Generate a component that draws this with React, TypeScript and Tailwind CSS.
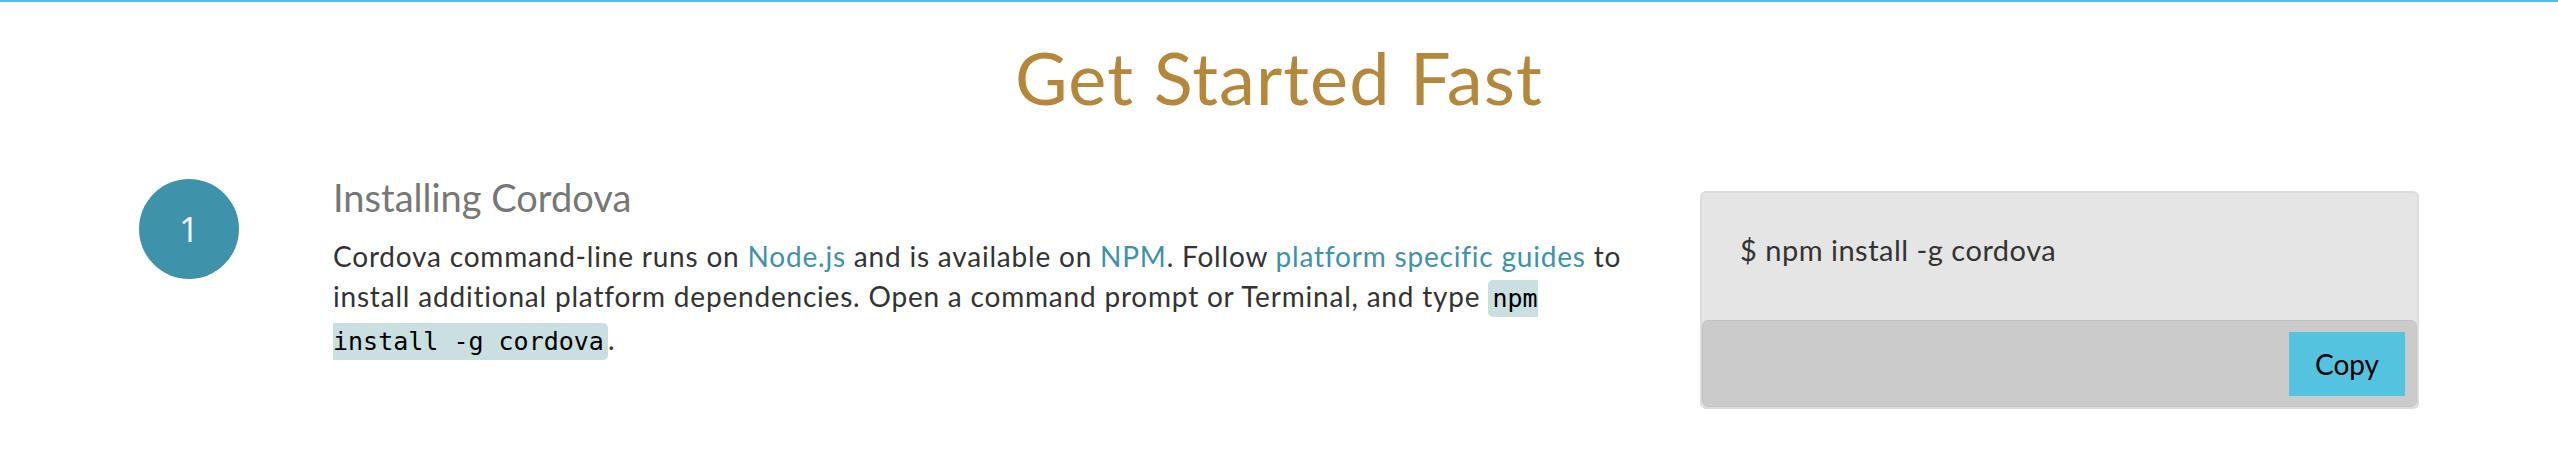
import React from 'react';

const Chip = ({ children }: { children: React.ReactNode }) => (
  <code className="font-['DejaVu_Sans_Mono',monospace] text-[25px] tracking-normal text-black bg-[#c9dfe0] rounded-[5px] px-[4px] py-[4px]">
    {children}
  </code>
);

const App = () => {
  return (
    <div className="min-h-screen bg-white border-t-2 border-[#53c2df] font-['Lato',sans-serif]">
      {/* Page title */}
      <h1 className="pt-[39px] text-center text-[72px] leading-[72px] tracking-[1.1px] font-normal text-[#b5873b]">
        Get Started Fast
      </h1>

      {/* Step 1 */}
      <div className="flex items-start px-[139px] mt-[66px]">
        <div className="w-[100px] h-[100px] shrink-0 rounded-full bg-[#3e92aa] flex items-center justify-center text-white text-[35px] font-['Open_Sans',sans-serif]">
          1
        </div>

        <div className="ml-[94px] w-[1310px]">
          <h3 className="text-[38px] leading-[36px] text-[#777777]">Installing Cordova</h3>
          <p className="mt-[21px] text-[28px] leading-[40px] tracking-[0.8px] text-[#333333]">
            Cordova command-line runs on <a className="text-[#3e92aa]">Node.js</a> and is available on{' '}
            <a className="text-[#3e92aa]">NPM</a>. Follow <a className="text-[#3e92aa]">platform specific guides</a> to
            install additional platform dependencies. Open a command prompt or Terminal, and type{' '}
            <Chip>npm install -g cordova</Chip>.
          </p>
        </div>

        <div className="ml-auto mt-[12px] w-[719px] rounded-md border-2 border-[#dcdcdc] bg-[#e5e5e5] overflow-hidden">
          <div className="h-[127px] pt-[40px] pl-[38px] text-[29px] leading-[34px] tracking-[0.5px] text-[#333333]">
            $ npm install -g cordova
          </div>
          <div className="h-[87px] rounded-md border border-[#c3c3c3] bg-[#cbcbcb] flex items-center justify-end pr-[11px]">
            <button className="w-[116px] h-[64px] bg-[#53c3e0] text-black text-[28px]">Copy</button>
          </div>
        </div>
      </div>
    </div>
  );
};

export default App;
